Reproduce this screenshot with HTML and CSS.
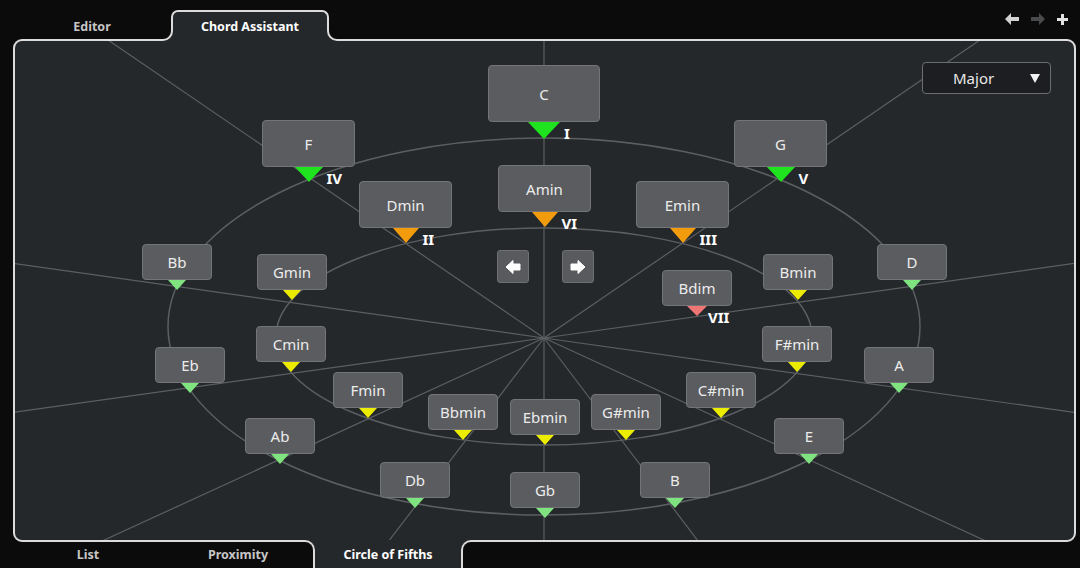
FILE: index.html
```html
<!DOCTYPE html>
<html lang="en">
<head>
<meta charset="UTF-8">
<title>Chord Assistant - Circle of Fifths</title>
<link rel="stylesheet" href="styles.css">
</head>
<body>

<div class="app">
  <div class="tabbar top">
    <div class="tab">Editor</div>
    <div class="tab active">Chord Assistant</div>
    <div class="tools">
      <svg width="14" height="12" viewBox="0 0 14 12"><path d="M0 6 L6 0 V4 H14 V8 H6 V12 Z" fill="#d2d2d2"/></svg>
      <svg width="14" height="12" viewBox="0 0 14 12"><path d="M14 6 L8 0 V4 H0 V8 H8 V12 Z" fill="#4a4b4d"/></svg>
      <svg width="11" height="11" viewBox="0 0 11 11"><path d="M4 0 H7 V4 H11 V7 H7 V11 H4 V7 H0 V4 H4 Z" fill="#e2e2e2"/></svg>
    </div>
  </div>

  <div class="panel">
    <!-- circle lines, drawn in page coordinates -->
    <svg class="wires" viewBox="15 41 1059 499" width="1059" height="499">
      <g stroke="#5c5f62" stroke-width="1.2" fill="none">
        <line x1="544" y1="338" x2="544" y2="0"/>
        <line x1="544" y1="338" x2="1492" y2="-310"/>
        <line x1="544" y1="338" x2="1645" y2="183"/>
        <line x1="544" y1="338" x2="1606" y2="487"/>
        <line x1="544" y1="338" x2="1604" y2="825"/>
        <line x1="544" y1="338" x2="931" y2="848"/>
        <line x1="544" y1="338" x2="544" y2="900"/>
        <line x1="544" y1="338" x2="154" y2="848"/>
        <line x1="544" y1="338" x2="-516" y2="825"/>
        <line x1="544" y1="338" x2="-518" y2="487"/>
        <line x1="544" y1="338" x2="-560" y2="183"/>
        <line x1="544" y1="338" x2="-404" y2="-310"/>
        <ellipse cx="544" cy="326.5" rx="376" ry="188.5" stroke-width="1.5"/>
        <ellipse cx="544" cy="336.5" rx="268" ry="108.5" stroke-width="1.5"/>
      </g>
    </svg>

    <div class="mode">Major <span class="caret"></span></div>

    <div class="step" style="left:482px;top:209px">
      <svg width="16" height="16" viewBox="0 0 16 16"><path d="M1 8 L8 1.5 V5 H15 V11 H8 V14.5 Z" fill="#fff" stroke="#fff" stroke-linejoin="round"/></svg>
    </div>
    <div class="step" style="left:547px;top:209px">
      <svg width="16" height="16" viewBox="0 0 16 16"><path d="M15 8 L8 1.5 V5 H1 V11 H8 V14.5 Z" fill="#fff" stroke="#fff" stroke-linejoin="round"/></svg>
    </div>

    <!-- diatonic chords -->
    <div class="node xl tonic" style="left:473px;top:24px"><div class="box">C</div><div class="mark"><div class="tri"></div><span class="deg">I</span></div></div>
    <div class="node lg tonic" style="left:247px;top:79px"><div class="box">F</div><div class="mark"><div class="tri"></div><span class="deg">IV</span></div></div>
    <div class="node lg tonic" style="left:719px;top:79px"><div class="box">G</div><div class="mark"><div class="tri"></div><span class="deg">V</span></div></div>
    <div class="node lg rel" style="left:483px;top:124px"><div class="box">Amin</div><div class="mark"><div class="tri"></div><span class="deg">VI</span></div></div>
    <div class="node lg rel" style="left:344px;top:140px"><div class="box">Dmin</div><div class="mark"><div class="tri"></div><span class="deg">II</span></div></div>
    <div class="node lg rel" style="left:621px;top:140px"><div class="box">Emin</div><div class="mark"><div class="tri"></div><span class="deg">III</span></div></div>
    <div class="node dim" style="left:647px;top:229px"><div class="box">Bdim</div><div class="mark"><div class="tri"></div><span class="deg">VII</span></div></div>

    <!-- outer ring -->
    <div class="node major" style="left:127px;top:203px"><div class="box">Bb</div><div class="mark"><div class="tri"></div></div></div>
    <div class="node major" style="left:862px;top:203px"><div class="box">D</div><div class="mark"><div class="tri"></div></div></div>
    <div class="node major" style="left:140px;top:306px"><div class="box">Eb</div><div class="mark"><div class="tri"></div></div></div>
    <div class="node major" style="left:849px;top:306px"><div class="box">A</div><div class="mark"><div class="tri"></div></div></div>
    <div class="node major" style="left:230px;top:377px"><div class="box">Ab</div><div class="mark"><div class="tri"></div></div></div>
    <div class="node major" style="left:759px;top:377px"><div class="box">E</div><div class="mark"><div class="tri"></div></div></div>
    <div class="node major" style="left:365px;top:421px"><div class="box">Db</div><div class="mark"><div class="tri"></div></div></div>
    <div class="node major" style="left:625px;top:421px"><div class="box">B</div><div class="mark"><div class="tri"></div></div></div>
    <div class="node major" style="left:495px;top:431px"><div class="box">Gb</div><div class="mark"><div class="tri"></div></div></div>

    <!-- middle ring -->
    <div class="node minor" style="left:242px;top:213px"><div class="box">Gmin</div><div class="mark"><div class="tri"></div></div></div>
    <div class="node minor" style="left:748px;top:213px"><div class="box">Bmin</div><div class="mark"><div class="tri"></div></div></div>
    <div class="node minor" style="left:241px;top:285px"><div class="box">Cmin</div><div class="mark"><div class="tri"></div></div></div>
    <div class="node minor" style="left:747px;top:285px"><div class="box">F#min</div><div class="mark"><div class="tri"></div></div></div>
    <div class="node minor" style="left:318px;top:331px"><div class="box">Fmin</div><div class="mark"><div class="tri"></div></div></div>
    <div class="node minor" style="left:671px;top:331px"><div class="box">C#min</div><div class="mark"><div class="tri"></div></div></div>
    <div class="node minor" style="left:413px;top:353px"><div class="box">Bbmin</div><div class="mark"><div class="tri"></div></div></div>
    <div class="node minor" style="left:495px;top:358px"><div class="box">Ebmin</div><div class="mark"><div class="tri"></div></div></div>
    <div class="node minor" style="left:576px;top:353px"><div class="box">G#min</div><div class="mark"><div class="tri"></div></div></div>
  </div>

  <div class="tabbar bottom">
    <div class="tab">List</div>
    <div class="tab">Proximity</div>
    <div class="tab active">Circle of Fifths</div>
  </div>
</div>

</body>
</html>
```

FILE: styles.css
```css
* {
  box-sizing: border-box;
}

body {
  margin: 0;
  background-color: #0b0b0b;
  font-family: "Noto Sans", "Open Sans", sans-serif;
}

.app {
  width: 1080px;
  height: 568px;
  display: flex;
  flex-direction: column;
  padding: 0 4px 0 13px;
  overflow: hidden;
}

/* Tabs */
.tabbar {
  display: flex;
  flex-shrink: 0;
}

.tabbar.top {
  height: 39px;
  align-items: flex-end;
}

.tabbar.bottom {
  height: 26px;
  align-items: flex-start;
}

.tab {
  width: 158px;
  height: 31px;
  display: flex;
  align-items: center;
  justify-content: center;
  font-size: 12.5px;
  font-weight: 700;
  color: #c6c6c6;
  position: relative;
}

.tabbar.top .tab {
  border-top: 2px solid transparent;
  margin-bottom: -2px;
}

.tabbar.bottom .tab {
  width: 150px;
  height: 26px;
  padding-bottom: 2px;
}

.tab.active {
  z-index: 2;
  color: #fff;
  background-color: #25282b;
  border: 2px solid #dcdcdc;
}

.tabbar.top .tab.active {
  border-top-color: #dcdcdc;
  border-bottom: none;
  border-radius: 7px 7px 0 0;
}

.tabbar.bottom .tab.active {
  border-top: none;
  border-bottom: none;
  height: 28px;
  margin-top: -2px;
  padding-bottom: 0;
}

/* curved joins between the active tab and the panel border */
.tab.active::before,
.tab.active::after {
  content: "";
  position: absolute;
  width: 12px;
  height: 12px;
  background-color: #0b0b0b;
  border: 0 solid #dcdcdc;
}

.tabbar.top .tab.active::before {
  left: -14px;
  bottom: 0;
  border-right-width: 2px;
  border-bottom-width: 2px;
  border-bottom-right-radius: 10px;
  box-shadow: 4px 4px 0 0 #25282b;
}

.tabbar.top .tab.active::after {
  right: -14px;
  bottom: 0;
  border-left-width: 2px;
  border-bottom-width: 2px;
  border-bottom-left-radius: 10px;
  box-shadow: -4px 4px 0 0 #25282b;
}

.tabbar.bottom .tab.active::before {
  left: -14px;
  top: 0;
  border-right-width: 2px;
  border-top-width: 2px;
  border-top-right-radius: 10px;
  box-shadow: 4px -4px 0 0 #25282b;
}

.tabbar.bottom .tab.active::after {
  right: -14px;
  top: 0;
  border-left-width: 2px;
  border-top-width: 2px;
  border-top-left-radius: 10px;
  box-shadow: -4px -4px 0 0 #25282b;
}

.tools {
  margin-left: auto;
  align-self: flex-start;
  margin-top: 13px;
  margin-right: 8px;
  display: flex;
  align-items: center;
  gap: 12px;
}

.tools svg {
  display: block;
}

/* Main panel */
.panel {
  flex: 0 0 503px;
  position: relative;
  z-index: 1;
  background-color: #25282b;
  border: 2px solid #dcdcdc;
  border-radius: 9px;
  overflow: hidden;
}

.wires {
  position: absolute;
  top: 0;
  left: 0;
}

.mode {
  position: absolute;
  left: 907px;
  top: 21px;
  width: 129px;
  height: 32px;
  display: flex;
  align-items: center;
  padding: 0 10px 0 30px;
  background-color: #1c1e21;
  border: 1px solid #6b6d70;
  border-radius: 4px;
  color: #e8e8e8;
  font-size: 15px;
}

.caret {
  margin-left: auto;
  width: 0;
  height: 0;
  border-left: 5px solid transparent;
  border-right: 5px solid transparent;
  border-top: 9px solid #f2f2f2;
}

.step {
  position: absolute;
  width: 32px;
  height: 33px;
  display: flex;
  align-items: center;
  justify-content: center;
  background-color: #595a5d;
  border: 1px solid #6e6f72;
  border-radius: 3px;
}

/* Chord nodes */
.node {
  position: absolute;
  display: flex;
  flex-direction: column;
  align-items: center;
}

.box {
  width: 70px;
  height: 36px;
  display: flex;
  align-items: center;
  justify-content: center;
  background-color: #5b5c5f;
  border: 1px solid #747578;
  border-radius: 4px;
  color: #ececec;
  font-size: 15px;
}

.node.lg .box {
  width: 93px;
  height: 47px;
}

.node.xl .box {
  width: 112px;
  height: 57px;
}

.mark {
  position: relative;
}

.tri {
  width: 0;
  height: 0;
  border-left: 9px solid transparent;
  border-right: 9px solid transparent;
  border-top: 10px solid #7fe37f;
}

.node.minor .tri {
  border-top-color: #ecec00;
}

.node.dim .tri {
  border-left-width: 10px;
  border-right-width: 10px;
  border-top-color: #f07676;
}

.node.tonic .tri {
  border-left-width: 14px;
  border-right-width: 14px;
  border-top: 15px solid #1fe31f;
}

.node.xl .tri {
  border-left-width: 16px;
  border-right-width: 16px;
  border-top-width: 17px;
}

.node.rel .tri {
  border-left-width: 13px;
  border-right-width: 13px;
  border-top: 15px solid #f29b0c;
}

.deg {
  position: absolute;
  left: calc(100% + 4px);
  top: 4px;
  color: #fff;
  font-size: 15px;
  font-weight: 700;
  line-height: 1;
}

.node.dim .deg {
  left: calc(100% + 1px);
}
```
